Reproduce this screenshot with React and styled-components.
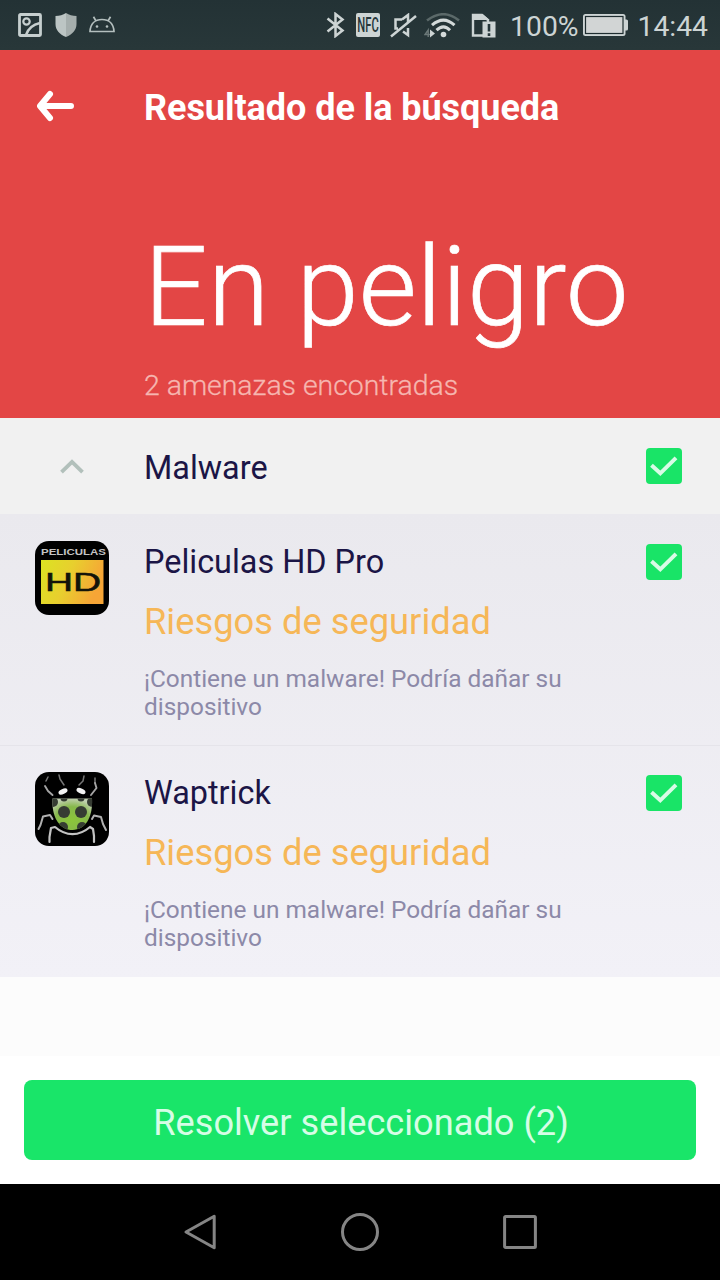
import React, { useState } from "react";
import styled, { createGlobalStyle } from "styled-components";

const threats = [
	{ id: 1, name: "Peliculas HD Pro", icon: "hd" },
	{ id: 2, name: "Waptrick", icon: "bug" },
];

const App = () => {
	const [checked, setChecked] = useState([1, 2]);
	const [open, setOpen] = useState(true);

	const toggle = (id) => {
		setChecked(checked.includes(id) ? checked.filter((c) => c !== id) : [...checked, id]);
	};
	const allChecked = checked.length === threats.length;

	return (
		<>
			<GlobalStyle />
			<Screen>
				<StatusBar />
				<Header>
					<HeaderTop>
						<BackButton type="button" aria-label="Atrás">
							<svg width="38" height="32" viewBox="0 0 38 32" fill="none" stroke="#fff" strokeWidth="6" strokeLinecap="round" strokeLinejoin="round">
								<path d="M35 16H5M14 4L4 16l10 12" />
							</svg>
						</BackButton>
						<PageTitle>Resultado de la búsqueda</PageTitle>
					</HeaderTop>
					<Status>En peligro</Status>
					<Found>2 amenazas encontradas</Found>
				</Header>
				<Group>
					<Toggle type="button" onClick={() => setOpen(!open)} $open={open}>
						<svg width="24" height="15" viewBox="0 0 24 15" fill="none" stroke="#b2c0bb" strokeWidth="3.8">
							<path d="M1.5 13.2L12 2.8l10.5 10.4" />
						</svg>
					</Toggle>
					<GroupName>Malware</GroupName>
					<Check on={allChecked} onClick={() => setChecked(allChecked ? [] : threats.map((t) => t.id))} />
				</Group>
				{open && (
					<List>
						{threats.map((t) => (
							<Item key={t.id}>
								<AppIcon>{t.icon === "hd" ? <HdIcon /> : <BugIcon />}</AppIcon>
								<ItemText>
									<Name>{t.name}</Name>
									<Risk>Riesgos de seguridad</Risk>
									<Desc>¡Contiene un malware! Podría dañar su dispositivo</Desc>
								</ItemText>
								<Check on={checked.includes(t.id)} onClick={() => toggle(t.id)} />
							</Item>
						))}
					</List>
				)}
				<Space />
				<Footer>
					<ResolveButton type="button">Resolver seleccionado ({checked.length})</ResolveButton>
				</Footer>
				<NavBar>
					<svg width="34" height="38" viewBox="0 0 34 38">
						<path d="M31.2 3.2v31.6L3 19z" />
					</svg>
					<svg width="40" height="40" viewBox="0 0 40 40">
						<circle cx="20" cy="20" r="17.5" />
					</svg>
					<svg width="34" height="34" viewBox="0 0 34 34">
						<rect x="1.6" y="1.6" width="30.8" height="30.8" rx="1" />
					</svg>
				</NavBar>
			</Screen>
		</>
	);
};

const StatusBar = () => (
	<Bar>
		<BarIcons>
			<svg width="24" height="24" viewBox="0 0 24 24" fill="none" stroke="#c6cfcf" strokeWidth="2.8">
				<rect x="1.5" y="1.5" width="21" height="21" rx="1" />
				<circle cx="8.5" cy="8.5" r="3.2" strokeWidth="2.2" />
				<path d="M8 22C10 16 15 11.5 22 10" strokeWidth="2.5" />
			</svg>
			<svg width="22" height="24" viewBox="0 0 22 24">
				<path d="M11 0c3 2 6.5 3 10.5 3v8c0 6-4 10.5-10.5 13z" fill="#a5aead" />
				<path d="M11 0C8 2 4.500 3 .5 3v8c0 6 4 10.5 10.5 13z" fill="#bcc5c4" />
			</svg>
			<svg width="26" height="18" viewBox="0 0 26 18" fill="none" stroke="#b4bfbe" strokeWidth="1.7">
				<path d="M1 15.5C1.5 8 6 3.5 13 3.5S24.5 8 25 15.5zM7 5L4.500.8M19 5L21.500.8" />
				<circle cx="8" cy="10.5" r="1.3" fill="#b4bfbe" stroke="none" />
				<circle cx="18" cy="10.5" r="1.3" fill="#b4bfbe" stroke="none" />
			</svg>
		</BarIcons>
		<BarRight>
			<svg width="19" height="26" viewBox="0 0 19 26" fill="none" stroke="#cdd4d4" strokeWidth="2.5">
				<path d="M1.5 6.5L16.5 18.5 9.5 24V2L16.5 7.5 1.5 19.5" />
			</svg>
			<BarItem $left="11px">
				<svg width="24" height="26" viewBox="0 0 24 26">
					<rect y="1" width="24" height="24" rx="2" fill="#cdd4d4" />
					<text transform="translate(12 20) scale(0.56 1)" textAnchor="middle" fontFamily="Roboto" fontWeight="500" fontSize="20" fill="#26363a">NFC</text>
				</svg>
			</BarItem>
			<BarItem $left="10px">
				<svg width="27" height="25" viewBox="0 0 27 25" fill="none" stroke="#cdd4d4" strokeWidth="2.5">
					<path d="M12 6.5H5.5v9H8M12 6.5l6-4.5v7M18 15v7l-5-3.5M1 23.5L26 3" />
				</svg>
			</BarItem>
			<BarItem $left="7px">
				<svg width="36" height="25" viewBox="0 0 36 25" fill="none" stroke="#d4dada" strokeWidth="3">
					<path d="M3 7.5Q19.5-5 35 7.5" stroke="#5b6969" strokeWidth="2.6" />
					<path d="M8 12.2Q19.5 2 30.5 12.2M12.5 17.2Q19.5 10.5 26 17.2" />
					<circle cx="19.5" cy="21.5" r="2.8" fill="#d4dada" stroke="none" />
					<path d="M6 16.5l5 4-5 4z" fill="#cdd4d4" stroke="none" />
					<path d="M4.2 24v-7L1 21.5h5" stroke="#6b7878" strokeWidth="1.4" />
				</svg>
			</BarItem>
			<BarItem $left="11px">
				<svg width="25" height="25" viewBox="0 0 25 25">
					<path d="M13 22.5H2V2h9l6 5v3" fill="none" stroke="#cdd4d4" strokeWidth="2.4" />
					<path d="M1 1h10.5l7 6H1z" fill="#cdd4d4" />
					<rect x="11.5" y="8.5" width="13" height="16" fill="#cdd4d4" />
					<path d="M18 11v7.5M18 20.3v2.6" stroke="#26363a" strokeWidth="2.6" />
				</svg>
			</BarItem>
			<BarText $left="14px">100%</BarText>
			<BarItem $left="4px">
				<svg width="45" height="22" viewBox="0 0 45 22">
					<rect width="42.5" height="22" rx="2.5" fill="#cdd4d4" />
					<rect x="40" y="5.5" width="5" height="11" rx="1.5" fill="#cdd4d4" />
					<rect x="2.5" y="2.5" width="37.5" height="17" fill="#d2d5d5" stroke="#1f2d30" strokeWidth="1.2" />
				</svg>
			</BarItem>
			<BarText $left="10px">14:44</BarText>
		</BarRight>
	</Bar>
);

const Check = ({ on, onClick }) => (
	<CheckBox type="button" role="checkbox" aria-checked={on} $on={on} onClick={onClick}>
		{on && (
			<svg width="36" height="36" viewBox="0 0 36 36" fill="none" stroke="#d8fbe6" strokeWidth="4">
				<path d="M5.5 17.3l8.800 8L30 9.8" />
			</svg>
		)}
	</CheckBox>
);

const HdIcon = () => (
	<svg width="74" height="74" viewBox="0 0 74 74">
		<defs>
			<linearGradient id="gold" x1="0" y1="0" x2="1" y2="0.3">
				<stop offset="0" stopColor="#dbe322" />
				<stop offset="0.5" stopColor="#e8cf2e" />
				<stop offset="1" stopColor="#f6a536" />
			</linearGradient>
		</defs>
		<rect width="74" height="74" rx="14" fill="#000" />
		<text x="6" y="14.3" textLength="65" lengthAdjust="spacingAndGlyphs" fontFamily="Liberation Sans" fontWeight="700" fontSize="9" fill="#c4c4c4">PELICULAS</text>
		<rect x="6" y="19" width="62.5" height="44" fill="url(#gold)" />
		<text x="10" y="50" textLength="56" lengthAdjust="spacingAndGlyphs" fontFamily="Liberation Sans" fontSize="26" fill="#14140a" stroke="#14140a" strokeWidth="0.6">HD</text>
	</svg>
);

const BugIcon = () => (
	<svg width="74" height="74" viewBox="0 0 74 74">
		<defs>
			<radialGradient id="shell" cx="0.5" cy="0.65" r="0.65">
				<stop offset="0" stopColor="#8cc63a" />
				<stop offset="0.6" stopColor="#86b84a" />
				<stop offset="1" stopColor="#c3d0b4" />
			</radialGradient>
			<clipPath id="body">
				<path d="M17.5 26.5h39.5c1 18-6 31.5-19.5 31.5S16.5 44.5 17.5 26.5z" />
			</clipPath>
		</defs>
		<rect width="74" height="74" rx="14" fill="#000" />
		<g fill="none" strokeLinecap="round" strokeLinejoin="round">
			<path d="M13 5l-2 4M24 3l1 4 4 6M49 4l-1 5-4 4M60 6v5" stroke="#777" strokeWidth="1.5" />
			<path d="M10 14l3 5 4.500 4M60 11l1.500 5-5.500 7" stroke="#a5a5a5" strokeWidth="1.9" />
			<path d="M3.500 57l2-4 2.500-8.500 7-1.500 2.500 4M71 58l-3-6-2-7-7-1.500-2 3.500" stroke="#b0b0b0" strokeWidth="2" />
			<path d="M14.500 70v-5l1.500-9 4-1c11 9.500 24 9.500 35 0l3 2 1 7v6" stroke="#c2c2c2" strokeWidth="2.2" />
		</g>
		<g clipPath="url(#body)">
			<rect x="16" y="26" width="42" height="34" fill="url(#shell)" />
			<g fill="#363c33">
				<circle cx="29" cy="40" r="6" />
				<circle cx="46" cy="40" r="6" />
				<circle cx="18" cy="30" r="5" />
				<circle cx="57" cy="30" r="5" />
				<circle cx="29" cy="26" r="3.5" />
				<circle cx="46" cy="26" r="3.5" />
				<circle cx="28" cy="55" r="5" />
				<circle cx="47" cy="55" r="5" />
			</g>
		</g>
		<ellipse cx="28" cy="19.5" rx="4.8" ry="2.6" transform="rotate(-25 28 19.5)" fill="#f2f2f2" />
		<ellipse cx="46" cy="19" rx="4.8" ry="2.6" transform="rotate(25 46 19)" fill="#f2f2f2" />
	</svg>
);

const GlobalStyle = createGlobalStyle`
	body{
		margin: 0;
		font-family: Roboto, "Noto Sans", sans-serif;
	}
	button{
		padding: 0;
		border: 0;
		background: none;
		font-family: inherit;
	}
	svg{
		display: block;
	}
`
const Screen = styled.div`
	display: flex;
	flex-direction: column;
	width: 720px;
	height: 1280px;
	overflow: hidden;
	background-color: #fcfcfc;
`
const Bar = styled.div`
	display: flex;
	justify-content: space-between;
	align-items: center;
	flex: none;
	height: 50px;
	padding: 0 12px 0 18px;
	box-sizing: border-box;
	background: linear-gradient(#233235, #283739);
`
const BarIcons = styled.div`
	display: flex;
	align-items: center;
	gap: 12.5px;
`
const BarRight = styled.div`
	display: flex;
	align-items: center;
`
const BarItem = styled.div`
	margin-left: ${({ $left }) => $left};
`
const BarText = styled.span`
	margin-left: ${({ $left }) => $left};
	padding-top: 3px;
	font-size: 28.3px;
	line-height: 34px;
	color: #cdd4d4;
`
const Header = styled.header`
	flex: none;
	height: 368px;
	padding-left: 144px;
	box-sizing: border-box;
	background-color: #e34645;
	color: #fff;
`
const HeaderTop = styled.div`
	display: flex;
	align-items: center;
	height: 115px;
	margin-left: -108px;
`
const BackButton = styled.button`
	width: 108px;
	padding-bottom: 3px;
`
const PageTitle = styled.h1`
	margin: 0;
	font-size: 36px;
	font-weight: 700;
	line-height: 44px;
	letter-spacing: -0.05px;
	white-space: nowrap;
`
const Status = styled.div`
	margin-top: 54px;
	font-size: 112px;
	font-weight: 300;
	line-height: 136px;
	white-space: nowrap;
	-webkit-text-stroke: 0.7px #fff;
`
const Found = styled.div`
	margin-top: 13px;
	font-size: 28.4px;
	font-weight: 300;
	line-height: 36px;
	color: #f6b6b0;
	-webkit-text-stroke: 0.3px #f6b6b0;
`
const Group = styled.div`
	display: grid;
	grid-template-columns: 74px 1fr 36px;
	column-gap: 35px;
	align-items: center;
	flex: none;
	height: 96px;
	padding: 0 38px 0 35px;
	background-color: #f1f1f1;
`
const Toggle = styled.button`
	display: flex;
	justify-content: center;
	transform: ${({ $open }) => ($open ? "none" : "rotate(180deg)")};
`
const GroupName = styled.div`
	padding-top: 4px;
	font-size: 32.4px;
	line-height: 40px;
	color: #1b1546;
`
const List = styled.div`
	flex: none;
	background: linear-gradient(#eae9ee, #f2f1f7);
`
const Item = styled.div`
	display: grid;
	grid-template-columns: 74px 1fr 36px;
	column-gap: 35px;
	align-items: start;
	height: 231px;
	padding: 27px 38px 0 35px;
	box-sizing: border-box;
	& + &{
		height: 232px;
		border-top: 1px solid #e5e4ea;
		padding-top: 26px;
	}
`
const AppIcon = styled.div`
	width: 74px;
	height: 74px;
`
const ItemText = styled.div`
	padding-top: 1px;
`
const Name = styled.div`
	font-size: 32.4px;
	line-height: 40px;
	color: #1b1546;
`
const Risk = styled.div`
	margin-top: 18px;
	font-size: 36.3px;
	line-height: 44px;
	color: #f6b757;
`
const Desc = styled.div`
	margin-top: 21px;
	font-size: 24.4px;
	line-height: 28px;
	color: #8c89a8;
`
const CheckBox = styled.button`
	width: 36px;
	height: 36px;
	border-radius: 4px;
	background-color: ${({ $on }) => ($on ? "#19e467" : "#d0d0d6")};
	${Item} &{
		margin-top: 3px;
	}
`
const Space = styled.div`
	flex: 1;
`
const Footer = styled.div`
	flex: none;
	padding: 24px;
	background-color: #fff;
`
const ResolveButton = styled.button`
	display: block;
	width: 100%;
	height: 80px;
	padding: 4px 0 0 2px;
	border-radius: 8px;
	background-color: #19e569;
	color: #d6fde6;
	font-size: 36.2px;
`
const NavBar = styled.nav`
	display: flex;
	justify-content: space-between;
	align-items: center;
	flex: none;
	height: 96px;
	padding: 0 183px;
	box-sizing: border-box;
	background-color: #000;
	svg{
		fill: none;
		stroke: #858585;
		stroke-width: 3;
		stroke-linejoin: round;
	}
`
export default App;
